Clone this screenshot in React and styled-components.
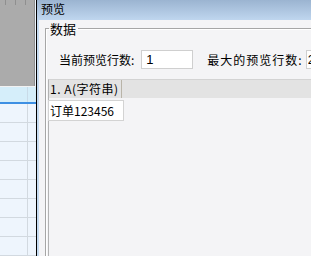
import styled, { createGlobalStyle } from "styled-components";

const GlobalStyle = createGlobalStyle`
    html, body {
        margin: 0;
        padding: 0;
        background: #f4f4f6;
    }
    body {
        font-family: "Noto Sans CJK SC", "Noto Sans", sans-serif;
        font-size: 12px;
        color: #000;
    }
`;

const App = () => {
    return (
        <>
            <GlobalStyle />
            <ScreenStyles>
                <SidePaneStyles>
                    <RulerStyles>
                        <Tick />
                        <Tick />
                        <Tick />
                    </RulerStyles>
                    <StripStyles />
                    <SelectedStyles />
                    <ListStyles>
                        {Array.from({ length: 8 }).map((_, i) => (
                            <ListRow key={i} />
                        ))}
                    </ListStyles>
                </SidePaneStyles>

                <WindowStyles>
                    <TitleBarStyles>预览</TitleBarStyles>
                    <ClientStyles>
                        <GroupStyles>
                            <legend>数据</legend>
                            <FormRowStyles>
                                <label>当前预览行数:</label>
                                <InputStyles defaultValue="1" />
                                <label className="second">最大的预览行数:</label>
                                <InputStyles className="tight" defaultValue="2" />
                            </FormRowStyles>
                            <GridStyles>
                                <GridHeaderStyles>
                                    <HeaderCell>1. A(字符串)</HeaderCell>
                                </GridHeaderStyles>
                                <GridRowStyles>
                                    <DataCell>订单123456</DataCell>
                                </GridRowStyles>
                            </GridStyles>
                        </GroupStyles>
                    </ClientStyles>
                </WindowStyles>
            </ScreenStyles>
        </>
    );
};

const ScreenStyles = styled.div`
    display: flex;
    width: 311px;
    height: 256px;
    overflow: hidden;
`;

const SidePaneStyles = styled.div`
    flex: none;
    width: 36px;
    display: flex;
    flex-direction: column;
    background: #eef5fd;
`;

const RulerStyles = styled.div`
    height: 86px;
    flex: none;
    box-sizing: border-box;
    background: #ababab;
    border-right: 1px solid #8e8e8e;
    margin-right: 1px;
    display: flex;
    gap: 9px;
    padding-left: 5px;
`;

const Tick = styled.span`
    width: 1px;
    height: 5px;
    background: #8f8f8f;
`;

const StripStyles = styled.div`
    height: 2px;
    background: #f2f2f2;
`;

const SelectedStyles = styled.div`
    height: 28px;
    box-sizing: border-box;
    background: #d5eefa;
    border-bottom: 2px solid #3d8fe3;
    &::after {
        content: "";
        display: block;
        margin-left: 27px;
        width: 1px;
        height: 100%;
        background: #c9dbe8;
    }
`;

const ListStyles = styled.div`
    display: flex;
    flex-direction: column;
`;

const ListRow = styled.div`
    height: 19px;
    box-sizing: border-box;
    border-bottom: 1px solid #d2d9e0;
    &::after {
        content: "";
        display: block;
        margin-left: 27px;
        width: 1px;
        height: 100%;
        background: #d2d9e0;
    }
`;

const WindowStyles = styled.div`
    flex: none;
    width: 420px;
    border-left: 1px solid #000;
    display: flex;
    flex-direction: column;
`;

const TitleBarStyles = styled.div`
    height: 20px;
    flex: none;
    box-sizing: border-box;
    padding-left: 4px;
    line-height: 17px;
    font-size: 12px;
    background: linear-gradient(#9bb4d1, #bfd6ef);
`;

const ClientStyles = styled.div`
    flex: 1;
    background: #f4f4f6;
    border-left: 2px solid #c6dbf0;
    padding-left: 6px;
`;

const GroupStyles = styled.fieldset`
    margin: 0;
    padding: 0;
    height: 300px;
    border: 1px solid #a6a6a6;
    box-shadow: inset 1px 1px 0 #ffffff;

    legend {
        font-size: 13px;
        line-height: 17px;
        margin-left: 3px;
        padding: 0 2px 0 1px;
    }
`;

const FormRowStyles = styled.div`
    display: flex;
    align-items: center;
    padding-left: 13px;
    margin-top: 13px;
    font-size: 12px;

    label {
        white-space: nowrap;
        margin-right: 7px;
    }
    label.second {
        margin-left: 14px;
        margin-right: 3px;
        letter-spacing: 1px;
    }
`;

const InputStyles = styled.input`
    width: 52px;
    height: 19px;
    box-sizing: border-box;
    border: 1px solid #cfcfcf;
    background: #fff;
    padding: 0 0 0 4px;
    font-family: "Liberation Sans", sans-serif;
    font-size: 13px;
    outline: none;

    &.tight {
        padding-left: 1px;
    }
`;

const GridStyles = styled.div`
    margin: 10px 0 0 2px;
    height: 200px;
    border-top: 1px solid #d3d3d3;
    border-left: 1px solid #b2b2b2;
`;

const GridHeaderStyles = styled.div`
    display: flex;
    height: 18px;
    background: #e3e3e3;
`;

const HeaderCell = styled.div`
    width: 73px;
    box-sizing: border-box;
    border-right: 1px solid #b9b4a8;
    padding-left: 1px;
    line-height: 18px;
    letter-spacing: 0.5px;
    white-space: nowrap;
`;

const GridRowStyles = styled.div`
    display: flex;
    margin-top: 2px;
`;

const DataCell = styled.div`
    width: 76px;
    height: 21px;
    margin-left: -1px;
    box-sizing: border-box;
    background: #fff;
    border: 1px solid #d3d3d3;
    padding-left: 1px;
    line-height: 19px;
    white-space: nowrap;
`;

export default App;
